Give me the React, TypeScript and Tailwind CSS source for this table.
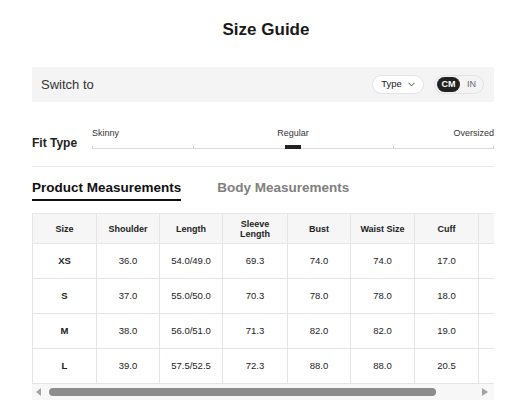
import React from "react";

const widths = ["w-[64px]", "w-[63px]", "w-[63px]", "w-[65px]", "w-[63px]", "w-[64px]", "w-[64px]", "w-[64px]"];
const headers = ["Size", "Shoulder", "Length", "Sleeve Length", "Bust", "Waist Size", "Cuff", ""];
const rows = [
  ["XS", "36.0", "54.0/49.0", "69.3", "74.0", "74.0", "17.0", ""],
  ["S", "37.0", "55.0/50.0", "70.3", "78.0", "78.0", "18.0", ""],
  ["M", "38.0", "56.0/51.0", "71.3", "82.0", "82.0", "19.0", ""],
  ["L", "39.0", "57.5/52.5", "72.3", "88.0", "88.0", "20.5", ""],
];

export default function App() {
  return (
    <div className="w-[517px] h-[403px] overflow-hidden bg-white pl-[32px] text-[#222] font-['Liberation_Sans',Arial,sans-serif]">
      <div className="w-[462px]">
        <h1 className="pt-[20px] pl-[6px] text-center text-[17px] leading-[20px] font-bold text-[#1a1a1a]">Size Guide</h1>

        <div className="mt-[27px] h-[35px] bg-[#f4f4f4] flex items-center justify-between pl-[9px] pr-[10px]">
          <span className="text-[13px] text-[#333]">Switch to</span>
          <div className="flex items-center">
            <div className="h-[19px] w-[52px] rounded-full bg-white border border-[#e3e3e3] flex items-center justify-center gap-[6px] text-[9.5px] text-[#222]">
              <span>Type</span>
              <svg width="7" height="5" viewBox="0 0 7 5">
                <polyline points="0.5,0.8 3.5,3.8 6.5,0.8" fill="none" stroke="#444" strokeWidth="1" />
              </svg>
            </div>
            <div className="ml-[10px] h-[19px] w-[50px] rounded-full border border-[#e3e3e3] bg-[#f4f4f4] flex items-center pl-[2px]">
              <div className="h-[15px] w-[23px] rounded-full bg-[#222] text-white font-bold text-[9px] flex items-center justify-center">CM</div>
              <span className="ml-[7px] text-[9px] text-[#666]">IN</span>
            </div>
          </div>
        </div>

        <div className="flex pt-[26px]">
          <div className="w-[60px] mt-[8px] text-[12px] leading-[14px] font-bold text-[#222]">Fit Type</div>
          <div className="w-[402px]">
            <div className="grid grid-cols-3 text-[9px] leading-[11px] text-[#333]">
              <span className="text-left">Skinny</span>
              <span className="text-center">Regular</span>
              <span className="text-right">Oversized</span>
            </div>
            <div className="relative h-[10px] border-b border-[#dddddd]">
              <div className="absolute left-0 bottom-[-1px] w-px h-[3px] bg-[#cccccc]" />
              <div className="absolute left-[101px] bottom-[-1px] w-px h-[3px] bg-[#cccccc]" />
              <div className="absolute left-[301px] bottom-[-1px] w-px h-[3px] bg-[#cccccc]" />
              <div className="absolute left-[401px] bottom-[-1px] w-px h-[3px] bg-[#cccccc]" />
              <div className="absolute left-[193px] bottom-[-1px] w-[16px] h-[4px] bg-[#222]" />
            </div>
          </div>
        </div>

        <div className="mt-[16px] h-px bg-[#e8e8e8]" />

        <div className="mt-[13px] flex gap-[36px]">
          <span className="text-[13.5px] leading-[16px] font-bold text-[#111] pb-[3px] border-b-2 border-[#111]">Product Measurements</span>
          <span className="text-[13.5px] leading-[16px] font-bold text-[#808080] pb-[3px] border-b-2 border-transparent">Body Measurements</span>
        </div>

        <div className="mt-[12px] w-[462px] overflow-hidden border-t border-l border-[#e5e5e5]">
          <div className="flex w-max bg-[#f6f6f6]">
            {headers.map((h, i) => (
              <div key={i} className={`${widths[i]} h-[30px] shrink-0 border-r border-b border-[#e5e5e5] flex items-center justify-center text-center text-[9px] leading-[10px] font-bold text-[#222]`}>
                {h === "Sleeve Length" ? (
                  <span>Sleeve<br />Length</span>
                ) : (
                  h
                )}
              </div>
            ))}
          </div>
          {rows.map((r, ri) => (
            <div key={ri} className="flex w-max bg-white">
              {r.map((c, ci) => (
                <div key={ci} className={`${widths[ci]} h-[35px] shrink-0 border-r border-b border-[#e5e5e5] flex items-center justify-center text-[9.5px] text-[#222] ${ci === 0 ? "font-bold" : ""}`}>
                  {c}
                </div>
              ))}
            </div>
          ))}
        </div>

        <div className="h-[16px] w-[462px] bg-[#f7f7f7] flex items-center">
          <svg className="ml-[4px]" width="5" height="8" viewBox="0 0 5 8">
            <polygon points="5,0 0,4 5,8" fill="#a3a3a3" />
          </svg>
          <div className="ml-[8px] w-[387px] h-[8px] rounded-full bg-[#8c8c8c]" />
          <svg className="ml-[46px]" width="6" height="8" viewBox="0 0 6 8">
            <polygon points="0,0 6,4 0,8" fill="#a3a3a3" />
          </svg>
        </div>
      </div>
    </div>
  );
}
